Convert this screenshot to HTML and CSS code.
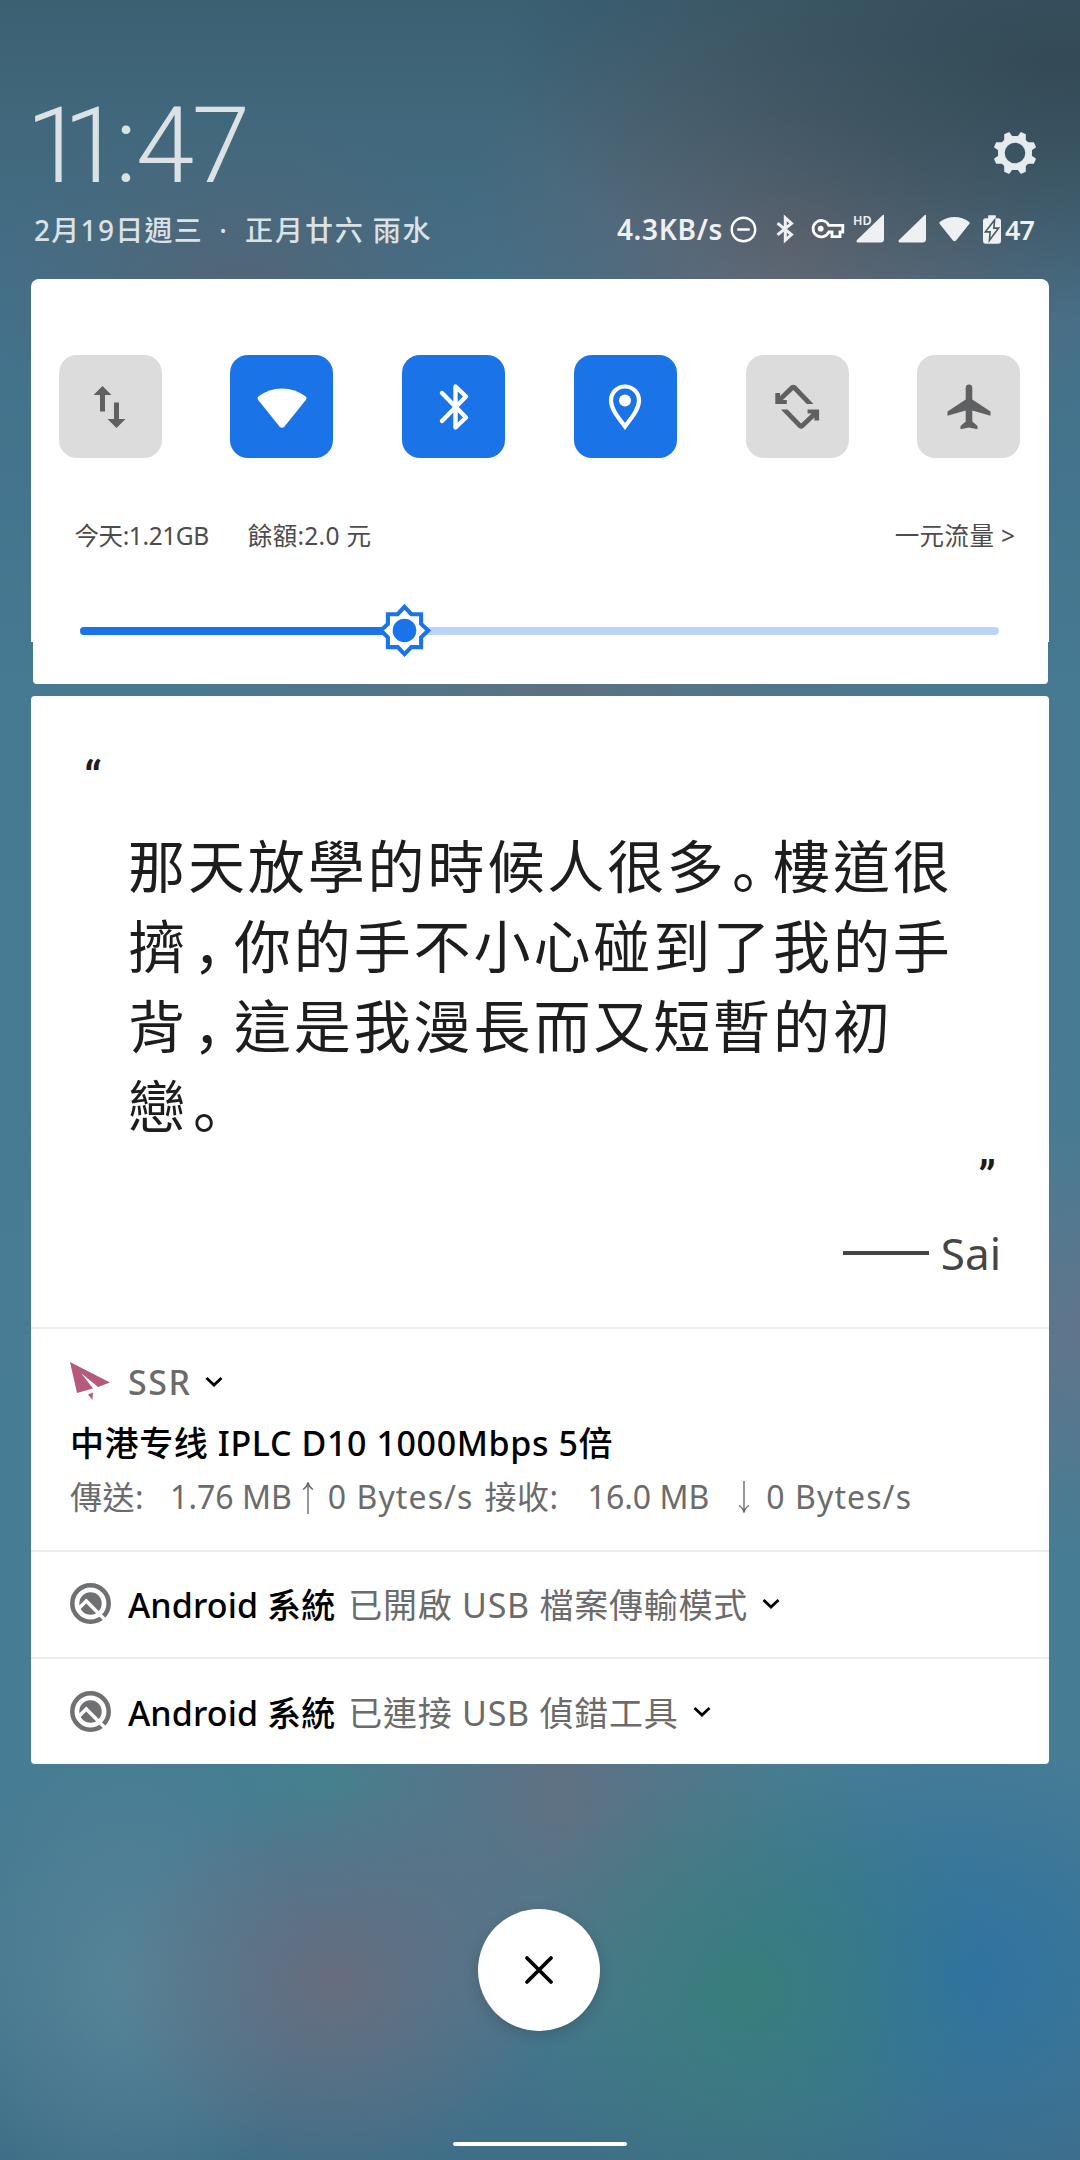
FILE: index.html
```html
<!DOCTYPE html>
<html lang="zh-Hant">
<head>
<meta charset="utf-8">
<title>通知</title>
<link rel="stylesheet" href="styles.css">
</head>
<body>
<main class="shade">
  <header class="header">
    <div class="clock-row">
      <div class="clock"><span class="d1">1</span><span class="d2">1</span><span class="colon">:</span><span class="d3">4</span>7</div>
      <svg class="gear" viewBox="0 0 42 42"><circle cx="21" cy="21" r="13.6" stroke-width="6.6" fill="none" stroke="#e6ebee"/><g fill="#e6ebee">
        <g id="tooth"><path d="M10.2 8.6V2.2L14.6 0.2H15.4L18.2 4.2 21 4.4V8Z"/><path d="M31.8 8.6V2.2L27.4 0.2H26.6L23.8 4.2 21 4.4V8Z"/></g>
        <use href="#tooth" transform="rotate(90 21 21)"/><use href="#tooth" transform="rotate(180 21 21)"/><use href="#tooth" transform="rotate(270 21 21)"/></g></svg>
    </div>
    <div class="info-row">
      <div class="date">2月19日週三<span class="dot">·</span><span class="lunar">正月廿六<span class="term">雨水</span></span></div>
      <div class="status">
        <span class="speed">4.3KB/s</span>
        <svg class="dnd" viewBox="0 0 28 28"><circle cx="14" cy="14" r="12.2" fill="none" stroke="#fff" stroke-width="2.4"/><path d="M7.5 14h13" stroke="#fff" stroke-width="2.6"/></svg>
        <svg class="bt" viewBox="0 0 18 28"><path d="M1.5 8.2 15.5 19.5 9.3 25.2V2.8L15.5 8.5 1.5 19.8" fill="none" stroke="#eef0f2" stroke-width="3"/></svg>
        <svg class="key" viewBox="0 0 34 22"><path d="M17.8 7.4A8.2 8.2 0 1 0 17.8 14H21V18.6H29V14H31.8V7.4Z" fill="none" stroke="#fff" stroke-width="2.8"/><circle cx="9.7" cy="10.7" r="2.9" fill="#fff"/></svg>
        <span class="hd-signal"><svg viewBox="0 0 28 28"><path d="M28 0V24Q28 27.500 24.500 27.500H2Q-.5 27 1 25L26 .7Q27.500 -.5 28 0Z" fill="#eef0f2"/></svg><b>HD</b></span>
        <svg class="signal" viewBox="0 0 28 28"><path d="M28 0V24Q28 27.500 24.500 27.500H2Q-.5 27 1 25L26 .7Q27.500 -.5 28 0Z" fill="#eef0f2"/></svg>
        <svg class="wifi" viewBox="0 0 50 40"><path d="M1.200 8.600Q-.4 10 1.200 12L22.500 38.500Q25 41 27.500 38.500L48.800 12Q50.400 10 48.800 8.600 38 .5 25 .5 12 .5 1.200 8.600Z" fill="#eef0f2"/></svg>
        <svg class="battery" viewBox="0 0 19 30"><path d="M5.500 0h8v3H16q3 0 3 3V27q0 3-3 3H3q-3 0-3-3V6Q0 3 3 3h2.500Z" fill="#eef0f2"/><path d="M12.200 5 2.500 17.500H7.500L6.800 26.500 16.500 13.500H11.500Z" fill="none" stroke="#465a66" stroke-width="1.700"/></svg>
        <span class="level">47</span>
      </div>
    </div>
  </header>

  <section class="panel">
    <div class="quick">
      <div class="tiles">
        <div class="tile"><svg viewBox="0 0 48 48"><g fill="#5f6062"><path d="M16.500 3 25.500 12H19V28.500H14V12H7.500Z"/><path d="M30.500 45 21.500 36H28V19.500H33V36H39.500Z"/></g></svg></div>
        <div class="tile on"><svg class="tile-wifi" viewBox="0 0 50 40"><path d="M1.200 8.600Q-.4 10 1.200 12L22.500 38.500Q25 41 27.500 38.500L48.800 12Q50.400 10 48.800 8.600 38 .5 25 .5 12 .5 1.200 8.600Z" fill="#fff"/></svg></div>
        <div class="tile on"><svg viewBox="0 0 48 48"><path d="M12 10 36 34.500 25.500 44.500V3.500L36 13.500 12 38" fill="none" stroke="#fff" stroke-width="4.400" stroke-linecap="round" stroke-linejoin="round"/></svg></div>
        <div class="tile on"><svg viewBox="0 0 48 48"><path d="M24 43.500C17 34 10 26 10 17.500a14 14 0 0 1 28 0C38 26 31 34 24 43.500Z" fill="none" stroke="#fff" stroke-width="4.200"/><circle cx="24" cy="17.500" r="6" fill="#fff"/></svg></div>
        <div class="tile"><svg viewBox="0 0 48 48"><g id="turn" fill="#5f6062"><path d="M2.300 10H7V13L17.800 2.600Q20.300 .8 22.800 2.600L40.500 21H33.800L20.300 7 9.800 17H13.800V21H2.300Z"/></g><use href="#turn" transform="rotate(180 24.200 23.700)"/></svg></div>
        <div class="tile"><svg viewBox="0 0 48 48"><path d="M24 1.500q3.300 0 3.300 3.500V16.500L45.500 28.500v4.200L27.300 27.500V38.500L32.500 43v3.200L24 44.500 15.500 46.200V43l5.200-4.500V27.500L2.500 32.700V28.500L20.700 16.500V5Q20.700 1.500 24 1.500Z" fill="#5f6062"/></svg></div>
      </div>
      <div class="usage"><span class="today">今天:1.21GB</span><span class="balance">餘額:2.0 元</span><span class="plan">一元流量 &gt;</span></div>
    </div>
    <div class="brightness">
      <div class="track"><div class="fill"></div><svg class="knob" viewBox="0 0 52 52"><path d="M26 2.800 32.700 10H42.300V19.500L49.200 26 42.300 32.700V42.300H32.700L26 49.200 19.300 42.300H9.700V32.700L2.800 26 9.700 19.500V10H19.300Z" fill="#fff" stroke="#1a73e8" stroke-width="4"/><circle cx="26" cy="26" r="11.600" fill="#1a73e8"/></svg></div>
    </div>
    <div class="panel-foot"></div>
  </section>

  <section class="notes">
    <article class="quote">
      <div class="open">“</div>
      <p class="text">那天放學的時候人很多<i lang="zh-Hans">。</i>樓道很<br>擠<i lang="zh-Hans">，</i>你的手不小心碰到了我的手<br>背<i lang="zh-Hans">，</i>這是我漫長而又短暫的初<br>戀<i lang="zh-Hans">。</i></p>
      <div class="close-mark">”</div>
      <div class="author"><span class="dash"></span>Sai</div>
    </article>
    <article class="note ssr">
      <div class="app"><svg class="plane" viewBox="0 0 40 40"><g fill="#b55a7d"><path d="M0 0 40 20.500 28 25 11 11 23 26.500 7 31Z"/><path d="M18 32.500 23 30.500 22.500 38Z"/></g></svg><span class="name">SSR</span><svg class="chev" viewBox="0 0 18 12"><path d="M1.500 2 9 9 16.500 2" fill="none" stroke="#000" stroke-width="2.800"/></svg></div>
      <div class="title"><span lang="zh-Hans">中港专线</span> IPLC D10 1000Mbps 5倍</div>
      <div class="traffic"><span class="sent">傳送:</span><span class="up">1.76 MB</span><svg class="arrow" viewBox="0 0 12 33"><path d="M6 33V1.500M1 8.500Q5 6 6 1.500 7 6 11 8.500" fill="none" stroke="#6b6b6b" stroke-width="1.400"/></svg><span class="rate">0 Bytes/s</span><span class="recv">接收:</span><span class="down">16.0 MB</span><svg class="arrow down-arrow" viewBox="0 0 12 33"><path d="M6 0V31.500M1 24.500Q5 27 6 31.500 7 27 11 24.500" fill="none" stroke="#6b6b6b" stroke-width="1.400"/></svg><span class="rate">0 Bytes/s</span></div>
    </article>
    <article class="note sys">
      <svg class="q" viewBox="0 0 41 41"><circle cx="20.500" cy="20.500" r="18.200" fill="none" stroke="#6f7072" stroke-width="4.500"/><circle cx="20.500" cy="20.500" r="11.200" fill="#6f7072"/><path d="M7 27.200 16.200 18 36 37.800" fill="none" stroke="#fff" stroke-width="3.400"/></svg>
      <span class="name strong">Android 系統</span><span class="msg">已開啟 USB 檔案傳輸模式</span><svg class="chev" viewBox="0 0 18 12"><path d="M1.500 2 9 9 16.500 2" fill="none" stroke="#000" stroke-width="2.800"/></svg>
    </article>
    <article class="note sys last">
      <svg class="q" viewBox="0 0 41 41"><circle cx="20.500" cy="20.500" r="18.200" fill="none" stroke="#6f7072" stroke-width="4.500"/><circle cx="20.500" cy="20.500" r="11.200" fill="#6f7072"/><path d="M7 27.200 16.200 18 36 37.800" fill="none" stroke="#fff" stroke-width="3.400"/></svg>
      <span class="name strong">Android 系統</span><span class="msg">已連接 USB 偵錯工具</span><svg class="chev" viewBox="0 0 18 12"><path d="M1.500 2 9 9 16.500 2" fill="none" stroke="#000" stroke-width="2.800"/></svg>
    </article>
  </section>

  <div class="dismiss"><svg viewBox="0 0 28 28"><path d="M2 2 26 26M26 2 2 26" stroke="#000" stroke-width="3.800" stroke-linecap="round"/></svg></div>
  <div class="home-bar"></div>
</main>
</body>
</html>
```

FILE: styles.css
```css
* { box-sizing: border-box; }
body { margin: 0; }
svg { display: block; flex: none; overflow: visible; }
.shade {
  width: 1080px; height: 2160px; overflow: hidden;
  display: flex; flex-direction: column; align-items: center;
  font-family: "Noto Sans", "Noto Sans CJK TC", sans-serif;
  background:
    radial-gradient(ellipse 220px 200px at 335px 1980px, rgba(106,108,126,.95), rgba(106,108,126,0)),
    radial-gradient(ellipse 240px 240px at 750px 1990px, rgba(56,126,122,.95), rgba(56,126,122,0)),
    radial-gradient(ellipse 290px 240px at 955px 1975px, rgba(46,114,162,1), rgba(46,114,162,0)),
    radial-gradient(ellipse 240px 260px at 560px 1795px, rgba(98,112,128,.9), rgba(98,112,128,0)),
    radial-gradient(ellipse 150px 90px at 330px 1780px, rgba(68,130,140,.8), rgba(68,130,140,0)),
    radial-gradient(ellipse 180px 240px at 130px 1980px, rgba(88,132,152,.9), rgba(88,132,152,0)),
    radial-gradient(ellipse 160px 220px at 1080px 1330px, rgba(100,116,138,.9), rgba(100,116,138,0)),
    radial-gradient(ellipse 560px 260px at 1060px 60px, rgba(52,74,86,1), rgba(52,74,86,.55) 50%, rgba(52,74,86,0)),
    radial-gradient(ellipse 340px 280px at 800px 240px, rgba(98,102,114,1), rgba(98,102,114,0)),
    radial-gradient(ellipse 260px 170px at 240px 290px, rgba(84,100,116,.9), rgba(84,100,116,0)),
    radial-gradient(ellipse 400px 120px at 560px 690px, rgba(94,112,128,.9), rgba(94,112,128,0)),
    linear-gradient(#3b6072 0, #41687c 130px, #43708a 300px, #467a92 700px, #467d95 1750px, #46788f 2000px, #3f6e88 2160px);
}
.header { width: 1018px; height: 279px; padding: 93px 15px 0 3px; flex: none; }
.clock-row { display: flex; justify-content: space-between; height: 107px; }
.clock { font: 350 105px/108px Roboto, sans-serif; color: #dae2e6; margin-left: -8px; font-kerning: none; white-space: nowrap; }
.d1 { letter-spacing: -21px; }
.d2 { letter-spacing: -6.500px; }
.colon { letter-spacing: -1px; }
.d3 { letter-spacing: -2.500px; }
.gear { width: 42px; height: 42px; margin: 39px -2px 0 0; }
.info-row { display: flex; justify-content: space-between; align-items: center; height: 60px; }
.date { font-size: 28px; line-height: 60px; font-weight: 500; color: #dae2e6; letter-spacing: 1.3px; white-space: nowrap; }
.dot { margin: 0 17px 0 16px; }
.lunar { letter-spacing: 1.9px; }
.term { margin-left: 8px; }
.status { display: flex; align-items: center; color: #eef0f2; font-weight: 500; position: relative; top: -1px; }
.speed { font-size: 28px; font-weight: 600; letter-spacing: .7px; margin-right: 7px; }
.dnd { width: 27px; height: 27px; margin-right: 19px; }
.bt { width: 18px; height: 28px; margin-right: 17px; }
.key { width: 34px; height: 22px; margin-right: 11px; }
.hd-signal { position: relative; width: 28px; height: 28px; margin-right: 14px; }
.hd-signal b { position: absolute; left: -3px; top: -1px; font-size: 12.500px; line-height: 14px; font-weight: 600; }
.signal { width: 28px; height: 28px; margin-right: 13px; }
.wifi { width: 31px; height: 26px; margin-right: 13px; }
.battery { width: 18px; height: 29px; margin-right: 4px; }
.level { font-size: 27px; font-weight: 600; letter-spacing: -1px; }

.panel { width: 1018px; height: 405px; flex: none; }
.quick { height: 303px; background: #fff; border-radius: 8px 8px 0 0; padding: 76px 28.500px 0 27.500px; }
.tiles { display: flex; justify-content: space-between; }
.tile { width: 103px; height: 103px; border-radius: 18px; background: #dcdcdc; display: flex; align-items: center; justify-content: center; }
.tile.on { background: #1b73e8; }
.tile svg { width: 48px; height: 48px; }
.tile .tile-wifi { width: 50px; height: 40px; margin-top: 3px; }
.usage { display: flex; margin: 60px 5px 0 16px; font-size: 24.500px; line-height: 36px; color: #4c4c4c; white-space: nowrap; }
.today { letter-spacing: -.4px; }
.balance { margin-left: 39px; letter-spacing: .3px; }
.plan { margin-left: auto; letter-spacing: .4px; }
.brightness { height: 60px; background: #fff; padding: 45px 50px 0 49px; }
.track { position: relative; height: 8px; border-radius: 4px; background: #bbd4f7; }
.fill { width: 324px; height: 8px; border-radius: 4px; background: #1a73e8; }
.knob { position: absolute; left: 298px; top: -23px; width: 53px; height: 53px; }
.panel-foot { height: 42px; margin: 0 1.500px; background: #fff; border-radius: 0 0 4px 4px; }

.notes { width: 1018px; height: 1068px; margin-top: 12px; background: #fff; border-radius: 4px; flex: none; }
.quote { height: 633px; border-bottom: 2px solid #ececec; padding: 52px 48px 0 53px; }
.quote .open { height: 75px; font: 500 46px/60px Roboto, sans-serif; color: #1d1d1d; }
.quote .text { margin: 0 0 4px; padding-left: 44px; font: 400 57px/80px "Noto Sans CJK TC", sans-serif; letter-spacing: 2.900px; color: #1d1d1d; white-space: nowrap; }
.text i { font-style: normal; font-family: "Noto Sans CJK SC", sans-serif; font-feature-settings: "halt"; letter-spacing: 0; padding: 0 12.500px 0 5px; }
.close-mark { height: 76px; font: 500 46px/60px Roboto, sans-serif; text-align: right; color: #1d1d1d; padding-right: 5px; }
.author { display: flex; align-items: center; justify-content: flex-end; font-size: 44px; line-height: 60px; color: #454545; }
.dash { width: 86px; height: 4px; background: #454545; margin-right: 12px; }
.note { border-bottom: 2px solid #ececec; padding: 0 40px 0 39px; }
.name { color: #6b6b6b; font-size: 34px; }
.chev { width: 18px; height: 12px; margin-left: 14px; }
.ssr { height: 223px; padding-top: 26px; }
.app { display: flex; align-items: center; height: 54px; }
.plane { width: 40px; height: 40px; }
.app .name { margin-left: 18px; letter-spacing: 1.500px; font-weight: 500; }
.title { margin-top: 6px; font-size: 34px; line-height: 53px; font-weight: 500; letter-spacing: .6px; color: #000; white-space: nowrap; }
.title span { font-family: "Noto Sans CJK SC"; }
.traffic { display: flex; align-items: center; font-size: 32px; line-height: 54px; color: #6b6b6b; white-space: nowrap; }
.sent, .recv { letter-spacing: .5px; }
.up { margin-left: 26px; }
.arrow { width: 12px; height: 33px; margin: 0 14px 0 10px; }
.rate { letter-spacing: 1.1px; }
.recv { margin-left: 11px; }
.down { margin-left: 29px; }
.down-arrow { margin: 0 16px 0 29px; }
.sys { height: 107px; padding-bottom: 2px; display: flex; align-items: center; white-space: nowrap; }
.q { width: 41px; height: 41px; margin-right: 17px; }
.strong { color: #000; font-weight: 500; letter-spacing: .1px; }
.msg { font-size: 34px; color: #6b6b6b; margin-left: 13px; letter-spacing: .75px; }
.last { border: 0; }
.dismiss { width: 122px; height: 122px; margin: 145px 0 0 -2px; border-radius: 50%; background: #fff; display: flex; align-items: center; justify-content: center; flex: none; box-shadow: 0 5px 16px rgba(0,0,0,.15); }
.dismiss svg { width: 28px; height: 28px; }
.home-bar { width: 174px; height: 4px; border-radius: 2px; background: #fff; margin-top: 111px; flex: none; }
```
